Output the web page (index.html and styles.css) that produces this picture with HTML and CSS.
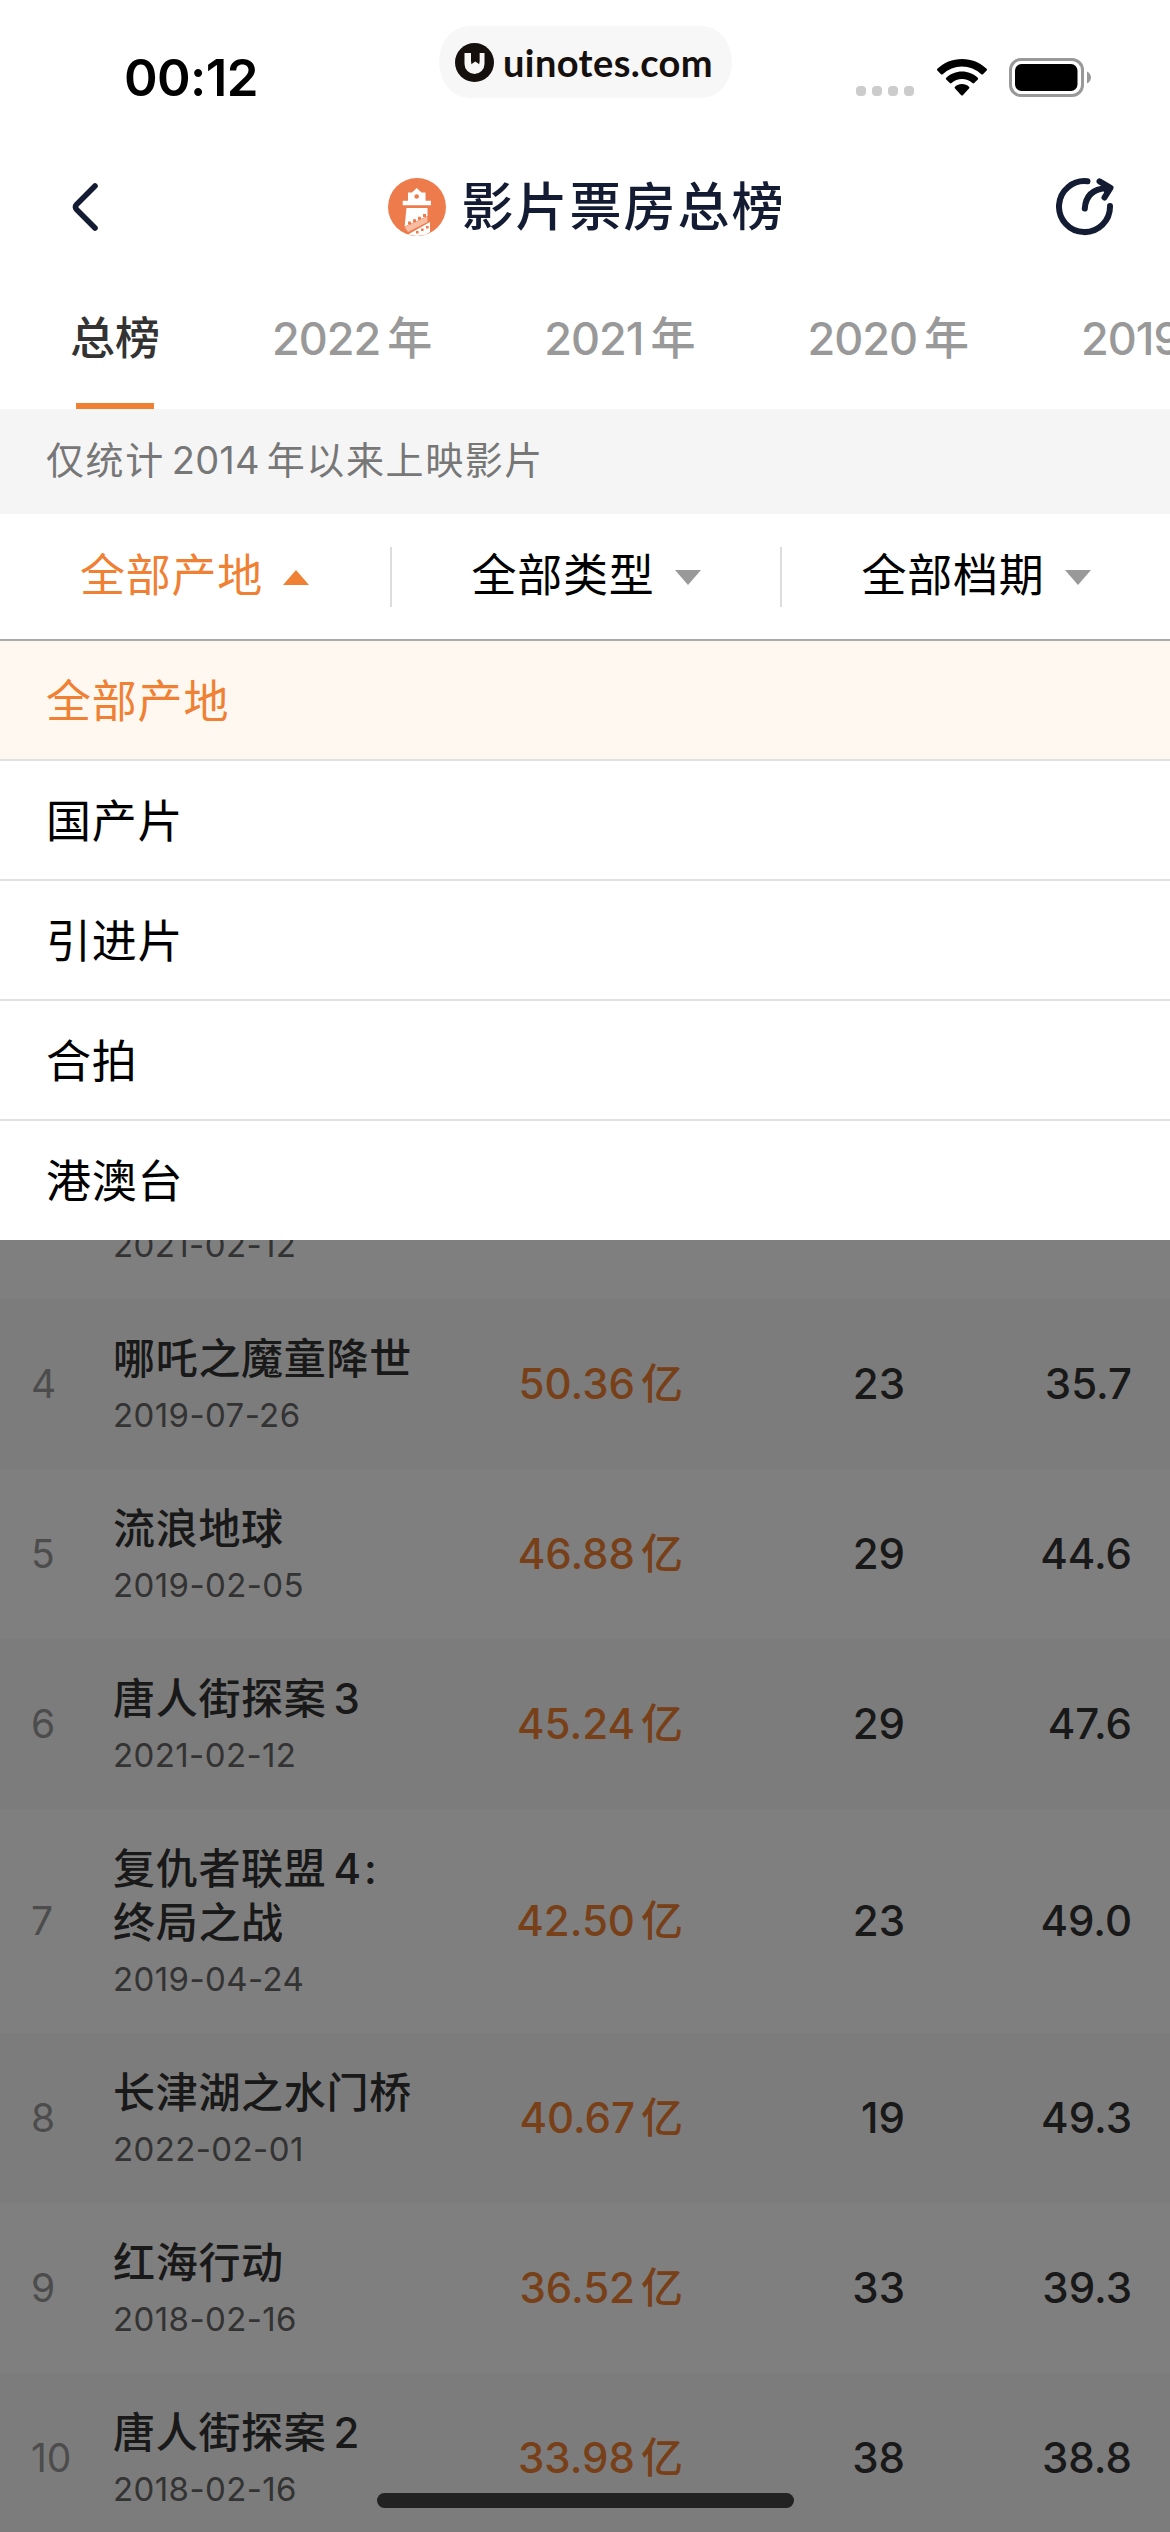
FILE: index.html
```html
<!DOCTYPE html>
<html lang="zh-CN">
<head>
<meta charset="utf-8">
<title>影片票房总榜</title>
<link rel="stylesheet" href="styles.css">
</head>
<body>
<div class="screen">
  <header class="status">
    <div class="time">00:12</div>
    <div class="pill">
      <svg width="39" height="39" viewBox="0 0 39 39"><circle cx="19.5" cy="19.5" r="19.5" fill="#15100e"/><path d="M9.500 10H16V19.500L20.300 16.800L24.500 19.500V10H29.500V21A10 10 0 0 1 9.500 21Z" fill="#f7f7f7"/><path d="M16.300 10H24.300V21.300L20.300 18.500L16.300 21.300Z" fill="#15100e"/></svg>
      <span>uinotes.com</span>
    </div>
    <div class="indicators">
      <div class="dots"><i></i><i></i><i></i><i></i></div>
      <svg class="wifi" width="50" height="37" viewBox="0 0 50 37"><path d="M25 0C34.500 0 43.500 3.700 49.600 9.800Q50.400 10.700 49.600 11.500L46 15.200Q45.200 16 44.300 15.200A28 28 0 0 0 5.700 15.200Q4.800 16 4 15.200L.4 11.500Q-.4 10.700.4 9.800C6.500 3.700 15.500 0 25 0Z"/><path d="M25 12.500C31 12.500 36.500 14.800 40.700 18.700Q41.600 19.500 40.800 20.400L37.200 24Q36.300 24.800 35.400 24A15.500 15.500 0 0 0 14.600 24Q13.700 24.800 12.800 24L9.200 20.400Q8.400 19.500 9.300 18.700C13.500 14.800 19 12.500 25 12.500Z"/><path d="M25 25C27.800 25 30.200 26 32 27.700Q32.900 28.500 32 29.400L26 35.900Q25 37 24 35.900L18 29.400Q17.100 28.500 18 27.700C19.800 26 22.200 25 25 25Z"/></svg>
      <svg width="82" height="39" viewBox="0 0 82 39"><rect x="1.500" y="1.500" width="72" height="36" rx="10.500" fill="none" stroke="#999" stroke-width="3"/><rect x="6" y="6" width="62.500" height="27" rx="6.500"/><path d="M78 13.500C80.500 14.500 82 17 82 19.500S80.500 24.500 78 25.500Z" fill="#999"/></svg>
    </div>
  </header>

  <nav class="nav">
    <svg width="28" height="50" viewBox="0 0 28 50"><path d="M24 4L5.500 22.500Q3.500 25 5.500 27.500L24 46" fill="none" stroke="#131c33" stroke-width="5.600" stroke-linecap="round"/></svg>
    <div class="brand">
      <svg width="58" height="58" viewBox="0 0 58 58"><circle cx="29" cy="29" r="29" fill="#ed7b4b"/><path d="M28.700 10L33.500 14.500H37.500V22.700H43V27.300H14.700V22.700H20V14.500H24Z" fill="#fff"/><circle cx="28.700" cy="18.500" r="2.300" fill="#ed7b4b"/><path d="M18.500 30H39.500V38L16.600 48.500Z" fill="#fff"/><path d="M16.600 49L39.500 38.500V44L20 54Z" fill="#f6bda3"/><path d="M42 44V54L38 56.500L29 58L20 56.500Z" fill="#fff"/><path d="M20 43.500h3v3h-3zM25 41.200h3v3h-3zM30 38.700h3v3h-3zM35 36h3v3h-3zM38 48h2.600v2.600H38zM33 50.500h2.600v2.600H33zM28 53h2.600v2.600H28z" fill="#ed7b4b"/></svg>
      <h1>影片票房总榜</h1>
    </div>
    <svg width="58" height="58" viewBox="0 0 58 58" fill="none" stroke="#131c33" stroke-width="6" stroke-linecap="round" stroke-linejoin="round"><path d="M31.500 3.300A25.500 25.500 0 1 0 54 28"/><path d="M28.800 30.500C29.500 19 36 11 51 10M43.500 3.300L54.500 9.800L48.500 19.500"/><path d="M46 5L54.500 9.800L50 17Z" fill="#131c33" stroke-width="2"/></svg>
  </nav>

  <div class="tabs">
    <div class="tab active">总榜</div>
    <div class="tab"><span class="num">2022</span>年</div>
    <div class="tab"><span class="num">2021</span>年</div>
    <div class="tab"><span class="num">2020</span>年</div>
    <div class="tab"><span class="num">2019</span>年</div>
  </div>

  <p class="notice">仅统计<span class="num">2014</span>年以来上映影片</p>

  <div class="filters">
    <div class="filter open">全部产地<svg width="26" height="15" viewBox="0 0 26 15"><path d="M0 15L13 0L26 15Z"/></svg></div>
    <div class="filter">全部类型<svg width="26" height="15" viewBox="0 0 26 15"><path d="M0 0H26L13 15Z"/></svg></div>
    <div class="filter">全部档期<svg width="26" height="15" viewBox="0 0 26 15"><path d="M0 0H26L13 15Z"/></svg></div>
  </div>

  <main class="content">
    <div class="list">
      <div class="row first"><div class="info"><div class="date">2021-02-12</div></div></div>
      <div class="row alt"><div class="rank">4</div><div class="info"><div class="name">哪吒之魔童降世</div><div class="date">2019-07-26</div></div><div class="gross"><span class="num">50.36</span>亿</div><div class="count">23</div><div class="price">35.7</div></div>
      <div class="row"><div class="rank">5</div><div class="info"><div class="name">流浪地球</div><div class="date">2019-02-05</div></div><div class="gross"><span class="num">46.88</span>亿</div><div class="count">29</div><div class="price">44.6</div></div>
      <div class="row alt"><div class="rank">6</div><div class="info"><div class="name">唐人街探案<span class="tail">3</span></div><div class="date">2021-02-12</div></div><div class="gross"><span class="num">45.24</span>亿</div><div class="count">29</div><div class="price">47.6</div></div>
      <div class="row"><div class="rank">7</div><div class="info"><div class="name">复仇者联盟<span class="tail">4:</span><br>终局之战</div><div class="date">2019-04-24</div></div><div class="gross"><span class="num">42.50</span>亿</div><div class="count">23</div><div class="price">49.0</div></div>
      <div class="row alt"><div class="rank">8</div><div class="info"><div class="name">长津湖之水门桥</div><div class="date">2022-02-01</div></div><div class="gross"><span class="num">40.67</span>亿</div><div class="count">19</div><div class="price">49.3</div></div>
      <div class="row"><div class="rank">9</div><div class="info"><div class="name">红海行动</div><div class="date">2018-02-16</div></div><div class="gross"><span class="num">36.52</span>亿</div><div class="count">33</div><div class="price">39.3</div></div>
      <div class="row alt"><div class="rank">10</div><div class="info"><div class="name">唐人街探案<span class="tail">2</span></div><div class="date">2018-02-16</div></div><div class="gross"><span class="num">33.98</span>亿</div><div class="count">38</div><div class="price">38.8</div></div>
    </div>
    <div class="mask"></div>
    <div class="menu">
      <div class="option selected">全部产地</div>
      <div class="option">国产片</div>
      <div class="option">引进片</div>
      <div class="option">合拍</div>
      <div class="option">港澳台</div>
    </div>
  </main>
  <div class="home-bar"></div>
</div>
</body>
</html>
```
FILE: styles.css
```css
* { box-sizing: border-box; margin: 0; padding: 0; }
body { background: #fff; overflow: hidden; }
svg { display: block; flex: none; }
.screen {
  position: relative;
  display: flex;
  flex-direction: column;
  width: 1170px;
  height: 2532px;
  overflow: hidden;
  color: #000;
  font-family: Inter, "Noto Sans CJK SC", sans-serif;
  white-space: nowrap;
}
.num { margin-right: 6px; }

.status {
  display: grid;
  grid-template-columns: 439px 293px 1fr;
  align-items: start;
  height: 141px;
}
.time {
  padding: 48px 0 0 124px;
  font-size: 51px;
  font-weight: 600;
  line-height: 60px;
  letter-spacing: -0.6px;
}
.pill {
  display: flex;
  align-items: center;
  gap: 9px;
  height: 72px;
  margin-top: 26px;
  padding-left: 16px;
  border-radius: 30px / 36px;
  background: #f7f7f7;
  color: #15100e;
  font: 700 38px/70px Lato, sans-serif;
  letter-spacing: 0.4px;
}
.indicators { display: flex; align-items: flex-start; padding: 58px 0 0 124px; }
.dots { display: flex; gap: 6px; margin-top: 28px; }
.dots i { width: 10px; height: 10px; border-radius: 4px; background: #ccc; }
.wifi { margin: 1px 22.500px 0 22.500px; }

.nav {
  display: flex;
  align-items: center;
  justify-content: space-between;
  height: 132px;
  padding: 0 56px 0 71px;
}
.brand { display: flex; align-items: center; gap: 15px; margin-left: 19px; }
h1 {
  padding-top: 2px;
  color: #131c33;
  font-size: 52px;
  font-weight: 500;
  line-height: 70px;
  letter-spacing: 2px;
}

.tabs {
  display: flex;
  gap: 112px;
  height: 136px;
  padding-left: 70px;
  color: #999;
  font-size: 45px;
  font-weight: 500;
  line-height: 130px;
}
.tab { flex: none; height: 130px; padding-top: 1px; }
.tab .num { letter-spacing: -1px; margin-right: 7px; }
.tab.active {
  display: flex;
  flex-direction: column;
  align-items: center;
  height: 136px;
  color: #333;
  line-height: 129px;
}
.tab.active::after { content: ""; width: 78px; height: 6px; background: #f08033; }

.notice {
  height: 105px;
  padding-left: 46px;
  background: #f5f5f5;
  color: #777;
  font-size: 38px;
  line-height: 103px;
  letter-spacing: 1.6px;
}
.notice .num { margin: 0 7px; letter-spacing: 0.2px; }

.filters {
  display: grid;
  grid-template-columns: repeat(3, 1fr);
  align-items: center;
  height: 125px;
}
.filter {
  display: flex;
  align-items: center;
  justify-content: center;
  gap: 20px;
  height: 60px;
  padding-bottom: 2px;
  border-left: 2px solid #ddd;
  font-size: 45px;
  line-height: 56px;
  letter-spacing: 0.8px;
}
.filter svg { margin-top: 3px; fill: #999; }
.filter.open { padding-right: 3px; border-left-color: transparent; color: #f08033; }
.filter.open svg { fill: #f08033; }

.content { position: relative; flex: 1; overflow: hidden; }
.list { padding-top: 490px; }
.mask { position: absolute; inset: 0; background: rgba(0, 0, 0, .5); }
.menu { position: absolute; top: 0; left: 0; right: 0; border-top: 2px solid #aaa; background: #fff; }
.option {
  height: 120px;
  padding-left: 46px;
  border-bottom: 2px solid #e1e1e1;
  font-size: 45px;
  line-height: 121px;
  letter-spacing: 0.8px;
}
.option:last-child { height: 119px; border-bottom: 0; }
.selected { background: #fef8f1; color: #f08033; }

.row {
  display: grid;
  grid-template-columns: 82px 350px 220px 222px 1fr;
  align-items: center;
  padding: 33px 38px 34px 31px;
  background: #fff;
  color: #333;
  font-size: 42px;
  font-weight: 500;
  line-height: 54px;
}
.row.first { height: 170px; align-items: end; }
.row.first .info { grid-column: 2; }
.row.alt { background: #f9f9f9; }
.rank { color: #999; font-size: 39px; font-weight: 400; }
.name { letter-spacing: 0.7px; }
.tail { margin-left: 7px; letter-spacing: 3px; }
.date {
  margin-top: 9px;
  color: #666;
  font-size: 33px;
  font-weight: 400;
  line-height: 40px;
  letter-spacing: 0.4px;
}
.gross { color: #f08033; text-align: right; }
.count, .price { text-align: right; }
.home-bar {
  position: absolute;
  left: 377px;
  bottom: 24px;
  width: 417px;
  height: 15px;
  border-radius: 8px;
  background: #222;
}
```
